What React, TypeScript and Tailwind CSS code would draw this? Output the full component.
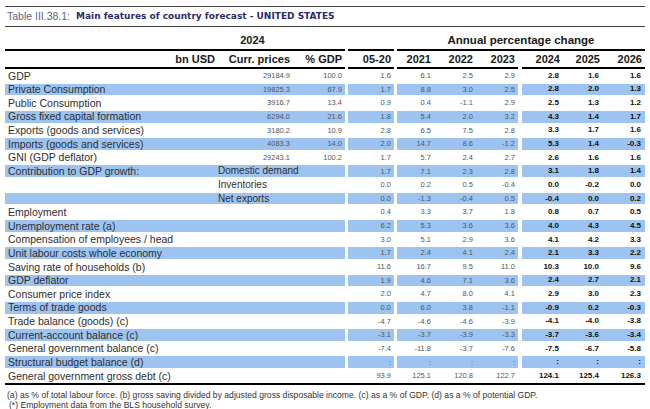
type Row = {
  label: string;
  sub?: string;
  cur?: string;
  pct?: string;
  v: string[];
  blue?: boolean;
};

const rows: Row[] = [
  { label: "GDP", cur: "29184.9", pct: "100.0", v: ["1.6", "6.1", "2.5", "2.9", "2.8", "1.6", "1.6"] },
  { label: "Private Consumption", cur: "19825.3", pct: "67.9", v: ["1.7", "8.8", "3.0", "2.5", "2.8", "2.0", "1.3"], blue: true },
  { label: "Public Consumption", cur: "3916.7", pct: "13.4", v: ["0.9", "0.4", "-1.1", "2.9", "2.5", "1.3", "1.2"] },
  { label: "Gross fixed capital formation", cur: "6294.0", pct: "21.6", v: ["1.8", "5.4", "2.0", "3.2", "4.3", "1.4", "1.7"], blue: true },
  { label: "Exports (goods and services)", cur: "3180.2", pct: "10.9", v: ["2.8", "6.5", "7.5", "2.8", "3.3", "1.7", "1.6"] },
  { label: "Imports (goods and services)", cur: "4083.3", pct: "14.0", v: ["2.0", "14.7", "8.6", "-1.2", "5.3", "1.4", "-0.3"], blue: true },
  { label: "GNI (GDP deflator)", cur: "29243.1", pct: "100.2", v: ["1.7", "5.7", "2.4", "2.7", "2.6", "1.6", "1.6"] },
  { label: "Contribution to GDP growth:", sub: "Domestic demand", v: ["1.7", "7.1", "2.3", "2.8", "3.1", "1.8", "1.4"], blue: true },
  { label: "", sub: "Inventories", v: ["0.0", "0.2", "0.5", "-0.4", "0.0", "-0.2", "0.0"] },
  { label: "", sub: "Net exports", v: ["0.0", "-1.3", "-0.4", "0.5", "-0.4", "0.0", "0.2"], blue: true },
  { label: "Employment", v: ["0.4", "3.3", "3.7", "1.8", "0.8", "0.7", "0.5"] },
  { label: "Unemployment rate (a)", v: ["6.2", "5.3", "3.6", "3.6", "4.0", "4.3", "4.5"], blue: true },
  { label: "Compensation of employees / head", v: ["3.0", "5.1", "2.9", "3.6", "4.1", "4.2", "3.3"] },
  { label: "Unit labour costs whole economy", v: ["1.7", "2.4", "4.1", "2.4", "2.1", "3.3", "2.2"], blue: true },
  { label: "Saving rate of households (b)", v: ["11.6", "16.7", "9.5", "11.0", "10.3", "10.0", "9.6"] },
  { label: "GDP deflator", v: ["1.9", "4.6", "7.1", "3.6", "2.4", "2.7", "2.1"], blue: true },
  { label: "Consumer price index", v: ["2.0", "4.7", "8.0", "4.1", "2.9", "3.0", "2.3"] },
  { label: "Terms of trade goods", v: ["0.0", "6.0", "3.8", "-1.1", "-0.9", "0.2", "-0.3"], blue: true },
  { label: "Trade balance (goods) (c)", v: ["-4.7", "-4.6", "-4.6", "-3.9", "-4.1", "-4.0", "-3.8"] },
  { label: "Current-account balance (c)", v: ["-3.1", "-3.7", "-3.9", "-3.3", "-3.7", "-3.6", "-3.4"], blue: true },
  { label: "General government balance (c)", v: ["-7.4", "-11.8", "-3.7", "-7.6", "-7.5", "-6.7", "-5.8"] },
  { label: "Structural budget balance (d)", v: [":", ":", ":", ":", ":", ":", ":"], blue: true },
  { label: "General government gross debt (c)", v: ["93.9", "125.1", "120.8", "122.7", "124.1", "125.4", "126.3"] },
];

const num = "text-right pr-[3px] text-[7.5px] leading-none text-[#555]";
const bold = "text-right pr-[4px] text-[8px] leading-none font-bold text-[#111]";

function DataRow({ r }: { r: Row }) {
  const bg = r.blue ? "bg-[#9dc4f1]" : "bg-white";
  return (
    <div className="flex h-[13.65px] py-[1px]">
      <div className={`flex w-[340px] items-center ${bg}`}>
        <div className="w-[155px] pl-[3px] text-[10.5px] leading-none whitespace-nowrap text-[#2e2e2e]">
          {r.label}
        </div>
        <div className="w-[58px]" />
        {r.sub ? (
          <div className="w-[127px] text-[10px] leading-none whitespace-nowrap text-[#2e2e2e]">{r.sub}</div>
        ) : (
          <>
            <div className={`w-[75px] ${num}`}>{r.cur}</div>
            <div className={`w-[52px] ${num}`}>{r.pct}</div>
          </>
        )}
      </div>
      <div className={`ml-[3px] flex w-[46px] items-center justify-end ${bg} ${num}`}>{r.v[0]}</div>
      <div className={`ml-[3px] flex w-[121px] items-center ${bg}`}>
        <div className={`w-[37px] ${num}`}>{r.v[1]}</div>
        <div className={`w-[42px] ${num}`}>{r.v[2]}</div>
        <div className={`w-[42px] ${num}`}>{r.v[3]}</div>
      </div>
      <div className={`ml-[4px] flex w-[123px] items-center ${bg}`}>
        <div className={`w-[41px] ${bold}`}>{r.v[4]}</div>
        <div className={`w-[40px] ${bold}`}>{r.v[5]}</div>
        <div className={`w-[42px] ${bold}`}>{r.v[6]}</div>
      </div>
    </div>
  );
}

const head = "text-right pr-[3px] text-[11px] leading-none font-bold text-[#1a1a1a]";

export default function App() {
  return (
    <div className="h-[409px] w-[650px] overflow-hidden bg-white px-[5px] pt-[6px] font-['Liberation_Sans',Arial,sans-serif]">
      <div className="border-t-[1.5px] border-[#444]" />
      <div className="flex h-[19px] items-center pl-[2px] whitespace-nowrap">
        <span className="text-[10.5px] text-[#5b6785]">Table III.38.1:</span>
        <span className="ml-[6px] font-['DejaVu_Sans',Verdana,sans-serif] text-[9px] font-bold text-[#2b2c6c]">
          Main features of country forecast - UNITED STATES
        </span>
      </div>
      <div className="border-t-[1.5px] border-[#444]" />

      <div className="flex h-[24px]">
        <div className="flex w-[340px] items-end border-b-2 border-black pb-[2px]">
          <div className="w-[155px]" />
          <div className="w-[185px] text-center text-[11px] leading-[13px] font-bold text-[#1a1a1a]">2024</div>
        </div>
        <div className="ml-[3px] w-[46px] border-b-2 border-black" />
        <div className="ml-[3px] flex w-[248px] items-end justify-center border-b-2 border-black pb-[2px] text-[11.5px] leading-[13px] font-bold text-[#1a1a1a]">
          Annual percentage change
        </div>
      </div>

      <div className="flex h-[18px]">
        <div className="flex w-[340px] items-center border-b-2 border-black">
          <div className="w-[155px]" />
          <div className={`w-[58px] ${head}`}>bn USD</div>
          <div className={`w-[75px] ${head}`}>Curr. prices</div>
          <div className={`w-[52px] ${head}`}>% GDP</div>
        </div>
        <div className={`ml-[3px] flex w-[46px] items-center justify-end border-b-2 border-black ${head}`}>05-20</div>
        <div className="ml-[3px] flex w-[121px] items-center border-b-2 border-black">
          <div className={`w-[37px] ${head}`}>2021</div>
          <div className={`w-[42px] ${head}`}>2022</div>
          <div className={`w-[42px] ${head}`}>2023</div>
        </div>
        <div className="ml-[4px] flex w-[123px] items-center border-b-2 border-black">
          <div className={`w-[41px] ${head}`}>2024</div>
          <div className={`w-[40px] ${head}`}>2025</div>
          <div className={`w-[42px] ${head}`}>2026</div>
        </div>
      </div>

      <div className="flex flex-col">
        {rows.map((r, i) => (
          <DataRow key={i} r={r} />
        ))}
      </div>
      <div className="border-t-2 border-black" />

      <div className="pt-[5px] pl-[2px] text-[8.6px] leading-[10px] whitespace-nowrap text-[#333]">
        <div>
          (a) as % of total labour force. (b) gross saving divided by adjusted gross disposable income. (c) as a % of
          GDP. (d) as a % of potential GDP.
        </div>
        <div className="pl-[2px]">(*) Employment data from the BLS household survey.</div>
      </div>
    </div>
  );
}
